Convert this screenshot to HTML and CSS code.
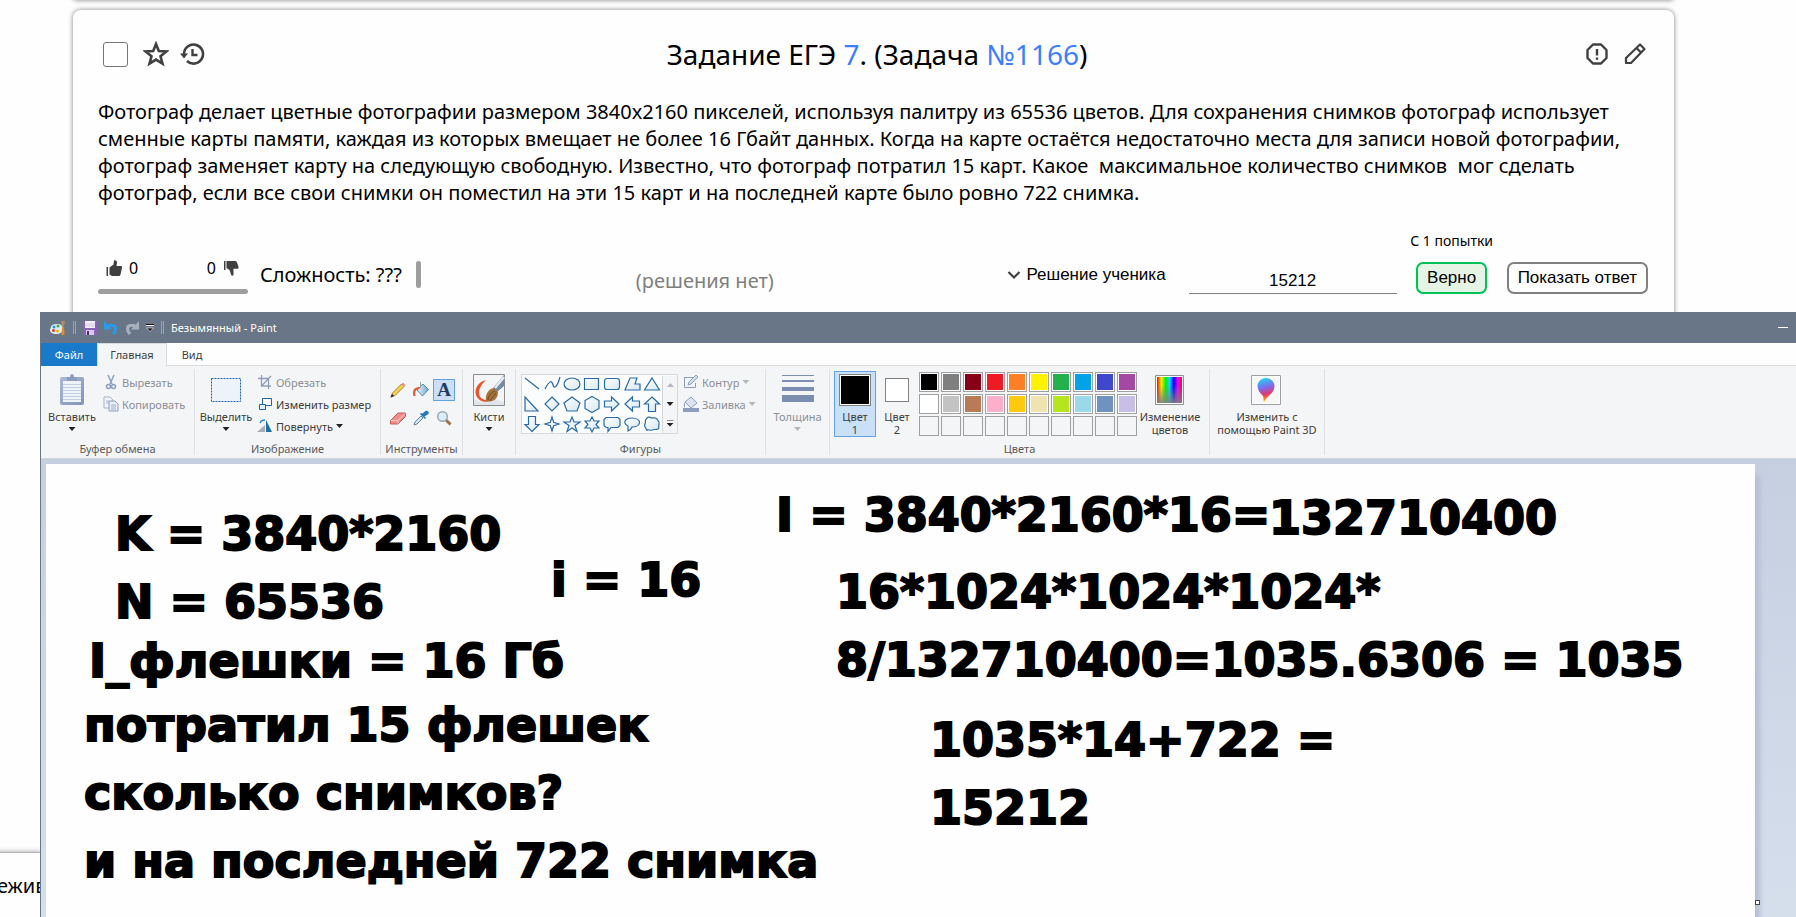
FILE: index.html
```html
<!DOCTYPE html>
<html lang="ru">
<head>
<meta charset="utf-8">
<title>Задание ЕГЭ 7</title>
<link rel="stylesheet" href="styles.css">
</head>
<body>
<svg class="defs" aria-hidden="true">
  <defs>
    <linearGradient id="shape" x1="0" y1="0" x2="1" y2="1"><stop offset="0" stop-color="#fff"/><stop offset="1" stop-color="#d5e8f2"/></linearGradient>
    <linearGradient id="rainbow"><stop offset="0" stop-color="#f00"/><stop offset=".17" stop-color="#fe0"/><stop offset=".35" stop-color="#0e0"/><stop offset=".5" stop-color="#0df"/><stop offset=".67" stop-color="#00f"/><stop offset=".83" stop-color="#e0f"/><stop offset="1" stop-color="#f02"/></linearGradient>
    <linearGradient id="fade" x1="0" y1="0" x2="0" y2="1"><stop offset=".3" stop-color="#808080" stop-opacity="0"/><stop offset="1" stop-color="#808080" stop-opacity=".9"/></linearGradient>
    <linearGradient id="pin" x1=".3" y1="0" x2=".5" y2="1"><stop offset="0" stop-color="#1fd6f2"/><stop offset=".4" stop-color="#7a6cf0"/><stop offset=".7" stop-color="#e8386a"/><stop offset="1" stop-color="#ffc400"/></linearGradient>
    <linearGradient id="board" x1="0" y1="0" x2="1" y2="1"><stop offset="0" stop-color="#a9b9d6"/><stop offset="1" stop-color="#8193b9"/></linearGradient>
    <linearGradient id="bucket"><stop offset="0" stop-color="#eaf5fc"/><stop offset="1" stop-color="#6ea6d6"/></linearGradient>
  </defs>
</svg>

<div class="card card-prev"></div>
<main class="card task">
  <header class="task-head">
    <div class="tools-left">
      <input type="checkbox" class="check" aria-label="Выбрать задачу">
      <button class="icon-btn" aria-label="В избранное"><svg width="26" height="26" viewBox="0 0 26 26"><path d="M13 3l2.8 7 7.6.5-5.9 4.8 2 7.4L13 18.600l-6.500 4.100 2-7.400-5.900-4.800 7.600-.5z" fill="none" stroke="#404040" stroke-width="2.600"/></svg></button>
      <button class="icon-btn" aria-label="История"><svg width="26" height="26" viewBox="0 0 26 26"><path d="M5 13a9.500 9.500 0 1 1 3 7" fill="none" stroke="#404040" stroke-width="2.600"/><path d="M1 12.500h8l-4 5z" fill="#404040"/><path d="M13.500 8v6h5" fill="none" stroke="#404040" stroke-width="2.400"/></svg></button>
    </div>
    <h1>Задание ЕГЭ <a href="#7">7</a>. (Задача <a href="#1166">№1166</a>)</h1>
    <div class="tools-right">
      <button class="icon-btn" aria-label="Сообщить об ошибке"><svg width="24" height="24" viewBox="0 0 24 24"><path d="M8 2.500h8L21.500 8v8L16 21.500H8L2.500 16V8z" fill="none" stroke="#404040" stroke-width="2.400" stroke-linejoin="round"/><path d="M12 7v6.500M12 15.500v2.200" stroke="#404040" stroke-width="2.400"/></svg></button>
      <button class="icon-btn" aria-label="Редактировать"><svg width="24" height="24" viewBox="0 0 24 24"><path d="M3 21v-5L17 2.500 21.500 7 8 21zM13.500 6l4.500 4.500" fill="none" stroke="#404040" stroke-width="2.200" stroke-linejoin="round"/></svg></button>
    </div>
  </header>
  <p class="task-text">Фотограф делает цветные фотографии размером 3840x2160 пикселей, используя палитру из 65536 цветов. Для сохранения снимков фотограф использует сменные карты памяти, каждая из которых вмещает не более 16 Гбайт данных. Когда на карте остаётся недостаточно места для записи новой фотографии, фотограф заменяет карту на следующую свободную. Известно, что фотограф потратил 15 карт. Какое&nbsp; максимальное количество снимков&nbsp; мог сделать фотограф, если все свои снимки он поместил на эти 15 карт и на последней карте было ровно 722 снимка.</p>
  <footer class="task-foot">
    <div class="votes">
      <div class="votes-row">
        <button class="vote"><svg width="16" height="16" viewBox="0 0 16 16"><path d="M.5 7h1.500v9H.5zM3.500 7.500l4-3 .5-4C9 0 11 .5 11 2.500L10.500 6H15c1 0 1.200 1 1 1.800l-1.500 6.700c-.3 1-1 1.500-2 1.500H6l-2.500-1.500z" fill="#404040"/></svg><span>0</span></button>
        <button class="vote"><span>0</span><svg width="16" height="16" viewBox="0 0 16 16"><path d="M1 1h1.500v9H1zM3.500 1h8c1.500 0 2 .4 2.500 1.500L15.500 7c.3 1-.3 1.800-1.500 1.800h-3.500L10.500 15c-.6 1.200-2.500 1-2.500-.7L6.500 10l-3-2z" fill="#404040"/></svg></button>
      </div>
      <div class="votes-bar"></div>
    </div>
    <span class="level">Сложность: ???</span>
    <span class="level-bar"></span>
    <span class="none">(решения нет)</span>
    <button class="student"><svg width="14" height="10" viewBox="0 0 14 10"><path d="M1.500 2L7 7.500 12.500 2" fill="none" stroke="#404040" stroke-width="2.200"/></svg>Решение ученика</button>
    <input class="answer" type="text" value="15212" aria-label="Ответ">
    <div class="verdict"><span>С 1 попытки</span><button class="btn btn-ok">Верно</button></div>
    <button class="btn">Показать ответ</button>
  </footer>
</main>
<aside class="toast">ежив</aside>

<section class="paint">
  <div class="titlebar">
    <svg width="16" height="16" viewBox="0 0 16 16"><path d="M7 4c4 0 6 2 6 5s-3 5-7 5-6-2-6-4 1-2 1-3c0-2 3-3 6-3z" fill="#d9eef8"/><circle cx="4" cy="7" r="1.500" fill="#2a9ad6"/><circle cx="8" cy="6" r="1.500" fill="#43a835"/><circle cx="3.500" cy="10.500" r="1.500" fill="#e33"/><circle cx="7.500" cy="11" r="1.500" fill="#f0b400"/><path d="M11.500 15l.5-8h2l.5 8z" fill="#f08a1c"/><path d="M11 1h4l-1 5h-2z" fill="#b98a54"/></svg>
    <i class="bar"></i>
    <button class="q" aria-label="Сохранить"><svg width="14" height="14" viewBox="0 0 14 14"><path d="M0 0h14v14H0z" fill="#8b62b5"/><path d="M2 0h10v7H2z" fill="#f4f0f8"/><path d="M2 3h10M2 5h10" stroke="#d3c8df"/><path d="M3 9h8v5H3z" fill="#d8cbe8"/><path d="M4 10h2v4H4z" fill="#4b2d75"/></svg></button>
    <button class="q" aria-label="Отменить"><svg width="14" height="14" viewBox="0 0 14 14"><path d="M4 4.500h4c4.500 0 4.500 5 1 8.500" fill="none" stroke="#2b9be8" stroke-width="3.200"/><path d="M0 0v8.500h8z" fill="#2b9be8"/></svg></button>
    <button class="q" aria-label="Повторить"><svg width="14" height="14" viewBox="0 0 14 14"><path d="M10 4.500H6c-4.500 0-4.500 5-1 8.500" fill="none" stroke="#a6b1bd" stroke-width="3.200"/><path d="M14 0v8.500H6z" fill="#a6b1bd"/></svg></button>
    <button class="q q-more" aria-label="Настройка панели"><svg width="8" height="8" viewBox="0 0 8 8"><path d="M0 1.500h8" stroke="#fff"/><path d="M0 .5h8" stroke="#111"/><path d="M.5 4h7L4 7.500z" fill="#111" stroke="#fff" stroke-width=".6"/></svg></button>
    <i class="bar"></i>
    <span class="wtitle">Безымянный - Paint</span>
    <button class="min" aria-label="Свернуть"></button>
  </div>
  <nav class="tabs"><a class="file" href="#file">Файл</a><a class="on" href="#home">Главная</a><a href="#view">Вид</a></nav>
  <div class="ribbon">
    <section class="group g-clip">
      <div class="body">
        <button class="big"><svg width="26" height="32" viewBox="0 0 26 32"><rect x="1" y="3" width="24" height="28" rx="2" fill="url(#board)"/><path d="M4 7h18v21H4z" fill="#eef3fa"/><path d="M4 10.500h18M4 13.500h18M4 16.500h18M4 19.500h18M4 22.500h18M4 25.500h18" stroke="#c3cfe3"/><path d="M8 3h3c0-4 4-4 4 0h3v4H8z" fill="#8d9cbb"/></svg><span>Вставить</span><i class="arrow"></i></button>
        <div class="stack">
          <button class="row off"><svg width="16" height="16" viewBox="0 0 16 16"><path d="M5 1l4 9M11 1l-4 9" stroke="#8c9ec0" stroke-width="1.500"/><circle cx="5.500" cy="12.500" r="2" fill="none" stroke="#8c9ec0" stroke-width="1.500"/><circle cx="10.500" cy="12.500" r="2" fill="none" stroke="#8c9ec0" stroke-width="1.500"/></svg>Вырезать</button>
          <button class="row off"><svg width="16" height="16" viewBox="0 0 16 16"><path d="M1 1h6l3 3v8H1z" fill="#f2f6fb" stroke="#a3b1cc"/><path d="M6 5h6l3 3v7H6z" fill="#e8eef8" stroke="#8c9ec0"/><path d="M8 9h5M8 11h5M8 13h5M3 5h3M3 7h3" stroke="#a3b1cc"/></svg>Копировать</button>
        </div>
      </div>
      <h2>Буфер обмена</h2>
    </section>
    <section class="group g-img">
      <div class="body">
        <button class="big"><svg width="32" height="32" viewBox="0 0 32 32"><rect x="1.500" y="4.500" width="29" height="23" fill="#eef3f9" stroke="#1d63a8" stroke-dasharray="2 1"/></svg><span>Выделить</span><i class="arrow"></i></button>
        <div class="stack">
          <button class="row off"><svg width="16" height="16" viewBox="0 0 16 16"><path d="M4.500 1v11H14M1 4.500h10.500V15M4 12.500L14 2" fill="none" stroke="#8c9ec0" stroke-width="1.300"/></svg>Обрезать</button>
          <button class="row"><svg width="16" height="16" viewBox="0 0 16 16"><path d="M5.500 2.500h9v7h-9z" fill="#fff" stroke="#1d63a8"/><path d="M2.500 8.500h6v5h-6z" fill="#e4eef8" stroke="#1d63a8"/></svg>Изменить размер</button>
          <button class="row"><svg width="16" height="16" viewBox="0 0 16 16"><path d="M0 14h8V7z" fill="#a8adb3"/><path d="M9 2v12h6z" fill="#1b6fa8"/><path d="M3 5c1-3 3-3 5-3" fill="none" stroke="#2a8ae0" stroke-width="1.300"/></svg>Повернуть<i class="arrow"></i></button>
        </div>
      </div>
      <h2>Изображение</h2>
    </section>
    <section class="group g-tools">
      <div class="body tools">
        <button aria-label="Карандаш"><svg width="16" height="16" viewBox="0 0 16 16"><path d="M1 15l1.500-4 9-9 2.500 2.500-9 9z" fill="#f3d257" stroke="#a98324"/><path d="M11.500 2L13 .5 15.500 3 14 4.500z" fill="#e58f86"/><path d="M.5 15.500L2 12l2 2z" fill="#222"/></svg></button>
        <button aria-label="Заливка"><svg width="16" height="16" viewBox="0 0 16 16"><path d="M4 8l6-6 5.500 5.500L9.500 14z" fill="url(#bucket)" stroke="#5786b3"/><path d="M1.500 14c-1-5 0-8 5-8" fill="none" stroke="#e4572e" stroke-width="2.200"/><path d="M7.500 0v6" stroke="#8aa"/></svg></button>
        <button class="on letter" aria-label="Текст">A</button>
        <button aria-label="Ластик"><svg width="16" height="16" viewBox="0 0 16 16"><path d="M.5 10.500l7.500-7.500h7.500v3.500L8 14H.5z" fill="#ef8f8c" stroke="#c25c5a"/><path d="M1 10.500h7l7-7M8 10.500v3" fill="none" stroke="#f8c8c4"/></svg></button>
        <button aria-label="Палитра"><svg width="16" height="16" viewBox="0 0 16 16"><path d="M1 15l1-3 6-6 2 2-6 6z" fill="#d4e6f4" stroke="#68829c"/><path d="M7 4l5 5 1-1-1.500-1.500L15.500 4c1-2-1-4-3-3L9.500 3.500 8 3z" fill="#2878b8"/></svg></button>
        <button aria-label="Масштаб"><svg width="16" height="16" viewBox="0 0 16 16"><path d="M9.500 9.500l5 5" stroke="#9c7148" stroke-width="3"/><circle cx="6.500" cy="6.500" r="4.800" fill="#dcecf8" stroke="#9aa8b6" stroke-width="1.500"/></svg></button>
      </div>
      <h2>Инструменты</h2>
    </section>
    <section class="group g-brush">
      <div class="body">
        <button class="big"><svg width="32" height="32" viewBox="0 0 32 32"><path d="M.5.500h31v31H.500z" fill="#f3f5f7" stroke="#8c8c8c"/><path d="M1 25c8 5 16 4 20 0l10 3v3H1z" fill="#dfe5ea"/><path d="M13 6C5 8 1 15 3 21s10 9 14 5c-6 1-11-2-11-7s3-9 7-13z" fill="#e8552a"/><path d="M31 1v11l-7 6-4-4z" fill="#7488a8"/><path d="M31 3l-9 11" stroke="#e6ecf3" stroke-width="2.500"/><path d="M13 27c-1-6 2-12 8-13l4 4c0 7-5 11-12 9z" fill="#a5713c"/><path d="M15 26c1-5 3-7 7-9M17 27c2-4 4-5 6-8" fill="none" stroke="#6e451e"/></svg><span>Кисти</span><i class="arrow"></i></button>
      </div>
    </section>
    <section class="group g-shapes">
      <div class="body">
        <div class="gallery">
          <svg width="140" height="60" viewBox="0 0 140 60" fill="url(#shape)" stroke="#2a6aa6" stroke-width="1.200">
            <path d="M3 4l14 11"/><path d="M23 15c5-10 7-8 8-4s4 3 7-8" fill="none"/><ellipse cx="50" cy="10" rx="8" ry="6"/><path d="M62.500 4.500h14v11h-14z"/><rect x="82.500" y="4.500" width="15" height="11" rx="2.500"/><path d="M108 4h7l-2 6h5v6h-15z"/><path d="M130 4l7.500 12h-15z"/>
            <path d="M3 23v14h13z"/><path d="M30 23l7 7-7 7-7-7z"/><path d="M50 23l8 6-3 8H45l-3-8z"/><path d="M70 22.500l7 4v8l-7 4-7-4v-8z"/><path d="M82.500 27h7v-4l7.500 7-7.500 7v-4h-7z"/><path d="M117.500 27h-7v-4l-7.500 7 7.500 7v-4h7z"/><path d="M130 23l7.500 7h-4v7.500h-7V30h-4z"/>
            <path d="M10 57.500l7-7h-3.500v-8h-7v8H3z"/><path d="M30 43l1.700 5.300L37 50l-5.300 1.700L30 57l-1.700-5.300L23 50l5.300-1.700z"/><path d="M50 43l2 5h6l-5 3.500 2 6-5-3.500-5 3.500 2-6-5-3.500h6z"/><path d="M70 43l2 4h5l-3 3.500 3 3.500h-5l-2 4-2-4h-5l3-3.500-3-3.500h5z"/><path d="M84 43.500h12l2 2v6l-2 2h-7l-3 4v-4h-2l-2-2v-6z"/><path d="M110 44c10 0 10 9 0 9-1 3-4 4-4 4v-5c-6-3-3-8 4-8z"/><path d="M125 44c2-2 4 0 5 0s4-1 5 1 3 3 2 5 1 4-1 5-4 0-6 1-4-1-5 0v1c0-2-2-3-2-4s-1-2 0-3-1-4 2-6z"/>
          </svg>
          <div class="scroll"><button aria-label="Вверх"><i class="arrow up"></i></button><button aria-label="Вниз"><i class="arrow"></i></button><button aria-label="Ещё"><i class="arrow more"></i></button></div>
        </div>
        <div class="stack">
          <button class="row off"><svg width="16" height="16" viewBox="0 0 16 16"><path d="M1 3.500h9M1.500 3v10.500h11V9" fill="none" stroke="#8c9ec0"/><path d="M5 11l1-3 7-7 2 2-7 7z" fill="#d5deee" stroke="#8c9ec0"/></svg>Контур<i class="arrow"></i></button>
          <button class="row off"><svg width="16" height="16" viewBox="0 0 16 16"><path d="M2 6l6-5 6 6-6 5z" fill="#dbe3f0" stroke="#8c9ec0"/><path d="M2 6c-2 3-1 5 0 6z" fill="#8c9ec0"/><path d="M0 12h16v4H0z" fill="#8c9ec0"/></svg>Заливка<i class="arrow"></i></button>
        </div>
      </div>
      <h2>Фигуры</h2>
    </section>
    <section class="group g-width">
      <div class="body">
        <button class="big off"><svg width="32" height="32" viewBox="0 0 32 32" fill="#7b8db0"><path d="M0 1h32v1H0zM0 6h32v2H0zM0 13h32v4H0zM0 21h32v7H0z"/></svg><span>Толщина</span><i class="arrow"></i></button>
      </div>
    </section>
    <section class="group g-colors">
      <div class="body">
        <button class="big color on"><i class="sw sw1"></i><span>Цвет<br>1</span></button>
        <button class="big color"><i class="sw sw2"></i><span>Цвет<br>2</span></button>
        <div class="palette"><i class="c1"></i><i class="c2"></i><i class="c3"></i><i class="c4"></i><i class="c5"></i><i class="c6"></i><i class="c7"></i><i class="c8"></i><i class="c9"></i><i class="c10"></i><i class="c11"></i><i class="c12"></i><i class="c13"></i><i class="c14"></i><i class="c15"></i><i class="c16"></i><i class="c17"></i><i class="c18"></i><i class="c19"></i><i class="c20"></i><i></i><i></i><i></i><i></i><i></i><i></i><i></i><i></i><i></i><i></i></div>
        <button class="big edit"><svg width="32" height="32" viewBox="0 0 32 32"><path d="M1.500 1.500h28v29h-28z" fill="#fff" stroke="#909090"/><path d="M3 3h25v26H3z" fill="url(#rainbow)"/><path d="M3 3h25v26H3z" fill="url(#fade)"/></svg><span>Изменение<br>цветов</span></button>
      </div>
      <h2>Цвета</h2>
    </section>
    <section class="group g-3d">
      <div class="body">
        <button class="big"><svg width="32" height="32" viewBox="0 0 32 32"><path d="M.5 1.500h29v29H.5z" fill="#f7f7f7" stroke="#a0a0a0"/><path d="M1.500 2.500h27v27h-27z" fill="none" stroke="#fff"/><path d="M15 4c5 0 8.500 4 8.500 8 0 7-6.500 9-10.500 16-1-2 0-4-1-6-3-3-5.500-6-5.500-10s3.500-8 8.500-8z" fill="url(#pin)"/></svg><span>Изменить с<br>помощью Paint 3D</span></button>
      </div>
    </section>
  </div>
  <div class="desk">
    <div class="canvas">
      <p class="note n1">K = 3840*2160<br>N = 65536</p>
      <p class="note n2">i = 16</p>
      <p class="note n3">I_флешки = 16 Гб</p>
      <p class="note n4">потратил 15 флешек<br>сколько снимков?<br>и на последней 722 снимка</p>
      <p class="note n5">I = 3840*2160*16=</p>
      <p class="note n6">132710400</p>
      <p class="note n7">16*1024*1024*1024*<br>8/132710400=1035.6306 = 1035</p>
      <p class="note n8">1035*14+722 =<br>15212</p>
      <i class="grip"></i>
    </div>
  </div>
</section>
</body>
</html>
```
FILE: styles.css
```css
* { box-sizing: border-box; }
body {
  margin: 0;
  position: relative;
  min-height: 100vh;
  overflow: hidden;
  background: #fefefe;
  color: #000;
  font: 20px/27px "Noto Sans", "Open Sans", sans-serif;
}
button, input { font: inherit; color: inherit; }
button { padding: 0; border: 0; background: none; }
a { color: #3d7eff; text-decoration: none; }
svg { display: block; flex: none; }
.defs { position: absolute; width: 0; height: 0; }

/* task card */
.card {
  margin: 0 122px 10px 73px;
  border-radius: 8px;
  background: #fefefe;
  box-shadow: 0 0 5px rgba(0, 0, 0, .5);
}
.card-prev { height: 8px; margin-top: -8px; }
.task { padding: 24px 24px 40px 25px; }
.task-head { display: grid; grid-template-columns: 1fr auto 1fr; align-items: center; height: 40px; }
.tools-left, .tools-right { display: flex; align-items: center; padding: 0 3px 0 5px; }
.tools-left { gap: 10px; }
.tools-right { justify-content: flex-end; gap: 14px; }
.tools-left .check { margin: 0 5px 0 0; width: 25px; height: 25px; appearance: none; border: 1px solid #767676; border-radius: 3px; background: #fff; }
h1 { margin: 0; padding-left: 6px; font-size: 28px; line-height: 40px; font-weight: 400; }
.task-text { margin: 24px 0 0; }
.task-foot { display: flex; align-items: flex-end; margin-top: 25px; padding-right: 2px; height: 63px; }
.votes { width: 150px; }
.votes-row { display: flex; justify-content: space-between; padding: 0 9px 11px 8px; }
.vote { display: flex; align-items: center; gap: 7px; font-size: 16px; line-height: 20px; }
.votes-bar { height: 5px; border-radius: 3px; background: #9e9e9e; }
.level { margin: 0 14px 6px 12px; }
.level-bar { width: 5px; height: 27px; margin-bottom: 6px; border-radius: 3px; background: #9e9e9e; }
.none { margin-left: 215px; color: #808080; }
.student, .answer, .btn { font-family: "Liberation Sans", Arial, sans-serif; font-size: 17px; }
.student { display: flex; align-items: center; gap: 5px; margin: 0 23px 6px auto; line-height: 26px; }
.answer { width: 208px; height: 26px; padding: 0; border: 0; border-bottom: 1px solid #808080; background: none; text-align: center; outline: 0; }
.verdict { display: flex; flex-direction: column; align-items: center; width: 110px; gap: 12px; }
.verdict span { font-size: 14px; line-height: 19px; }
.btn { height: 32px; padding: 0 9px; border: 2px solid #808080; border-radius: 7px; background: #fefefe; line-height: 26px; }
.btn-ok { border-color: #00c156; background: #e6f4e6; }

.toast { position: absolute; left: -8px; bottom: 0; width: 49px; height: 65px; padding: 19px 0 0 5px; border-top: 1px solid #b5b5b5; box-shadow: 0 0 5px rgba(0, 0, 0, .4); background: #fefefe; }

/* paint window */
.paint {
  position: absolute;
  top: 312px; right: 0; bottom: 0; left: 40px;
  display: flex;
  flex-direction: column;
  border-left: 1px solid #687687;
  background: #fefefe;
  color: #3c3c3c;
  font-size: 11px;
  line-height: 13px;
}
.titlebar { display: flex; align-items: center; gap: 7px; height: 31px; padding: 0 8px 0 9px; background: #687687; color: #fff; }
.titlebar .bar { width: 3px; height: 13px; border: solid #9ba5b0; border-width: 0 1px; }
.q { min-width: 14px; display: flex; justify-content: center; }
.q-more { min-width: 8px; }
.min { width: 10px; height: 1px; margin-left: auto; background: #fff; }
.tabs { display: flex; height: 23px; line-height: 23px; border-bottom: 1px solid #dadbdc; }
.tabs a { width: 70px; text-align: center; color: #3c3c3c; }
.tabs .file { width: 56px; height: 23px; background: #1979ca; color: #fff; }
.tabs .on { height: 23px; border: solid #dadbdc; border-width: 1px 1px 0; background: #f4f5f7; line-height: 22px; }
.tabs a:last-child { width: 50px; }
.ribbon { display: flex; height: 93px; padding: 3px 0; border-bottom: 1px solid #d3d5d8; background: #f4f5f7; }
.group { display: flex; flex-direction: column; justify-content: space-between; flex: none; border-right: 1px solid #dfe1e4; }
.group h2 { margin: 0; font-size: 11px; line-height: 12px; font-weight: 400; text-align: center; color: #5a5a5a; }
.body { display: flex; height: 68px; padding-top: 1px; }
.g-clip { width: 154px; }
.g-img { width: 186px; }
.g-tools { width: 82px; }
.g-brush { width: 53px; }
.g-shapes { width: 250px; }
.g-width { width: 64px; }
.g-colors { width: 380px; }
.g-3d { width: 115px; }
.big { display: flex; flex-direction: column; align-items: center; padding-top: 4px; width: 62px; white-space: nowrap; }
.big span { margin-top: 4px; }
.big .arrow { margin-top: 4px; }
.off { color: #8b8f96; }
.arrow { width: 7px; height: 4px; background: #222; clip-path: polygon(0 0, 100% 0, 50% 100%); }
.off .arrow { background: #b4b7bb; }
.arrow.up { background: #b4b7bb; transform: rotate(180deg); }
.stack { display: flex; flex-direction: column; padding-top: 1px; }
.row { display: flex; align-items: center; gap: 3px; height: 22px; white-space: nowrap; }
.g-brush .big, .g-width .big { width: 100%; }
.tools { display: grid; grid-template: 28px 28px / repeat(3, 23px); justify-content: center; padding-top: 10px; align-items: start; }
.tools button { display: grid; place-items: center; width: 22px; height: 22px; border: 1px solid transparent; }
.tools .on, .color.on { border: 1px solid #62a2e4; background: #c9e0f7; }
.tools .letter { font: bold 19px/18px "Liberation Serif", serif; color: #1f3864; }
.gallery { display: flex; width: 157px; height: 60px; margin: 4px 5px 0; border: 1px solid #d5d7da; background: #fbfcfd; align-items: center; }
.scroll { width: 15px; border-left: 1px solid #d5d7da; background: #f4f5f7; }
.scroll button { display: grid; place-items: center; width: 14px; height: 19px; }
.arrow.more { height: 7px; width: 7px; clip-path: polygon(0 0, 100% 0, 100% 15%, 0 15%, 0 50%, 100% 50%, 50% 100%, 0 50%); }
.color { width: 42px; height: 66px; margin: 1px 0 0 4px; padding-top: 2px; border: 1px solid transparent; }
.color + .color { margin-left: 0; }
.sw { width: 32px; height: 32px; border: 1px solid #808080; }
.sw1 { background: #000; box-shadow: inset 0 0 0 1px #fff; }
.sw2 { width: 24px; height: 24px; margin: 4px 0; background: #fff; }
.palette { display: grid; grid-template-columns: repeat(10, 20px); grid-auto-rows: 20px; gap: 2px; margin: 2px 2px 0 1px; }
.palette i { border: 1px solid #a0a0a0; box-shadow: inset 0 0 0 1px #fff; }
.palette i:nth-child(n + 21) { box-shadow: none; }
.c1 { background: #000; } .c2 { background: #7f7f7f; } .c3 { background: #880015; } .c4 { background: #ed1c24; } .c5 { background: #ff7f27; }
.c6 { background: #fff200; } .c7 { background: #22b14c; } .c8 { background: #00a2e8; } .c9 { background: #3f48cc; } .c10 { background: #a349a4; }
.c11 { background: #fff; } .c12 { background: #c3c3c3; } .c13 { background: #b97a57; } .c14 { background: #ffaec9; } .c15 { background: #ffc90e; }
.c16 { background: #efe4b0; } .c17 { background: #b5e61d; } .c18 { background: #99d9ea; } .c19 { background: #7092be; } .c20 { background: #c8bfe7; }
.g-3d .big { width: 100%; }

/* drawing area */
.desk { flex: 1; padding: 5px 41px 0 5px; background: linear-gradient(#c5cfe0, #d5dfec); }
.canvas { position: relative; height: 100%; background: #fefefe; box-shadow: 6px 10px 5px -1px #b3c1d6; }
.note { position: absolute; margin: 0; color: #000; font: 700 46px/68px "DejaVu Sans", sans-serif; -webkit-text-stroke: 2px #000; white-space: nowrap; }
.n1 { left: 69px; top: 36px; }
.n2 { left: 505px; top: 82px; }
.n3 { left: 43px; top: 163px; }
.n4 { left: 38px; top: 227px; }
.n5 { left: 730px; top: 17px; }
.n6 { left: 1223px; top: 20px; }
.n7 { left: 790px; top: 94px; }
.n8 { left: 884px; top: 242px; }
.grip { position: absolute; right: -5px; bottom: 12px; width: 5px; height: 5px; border: 1px solid #444; background: #fff; }
```
